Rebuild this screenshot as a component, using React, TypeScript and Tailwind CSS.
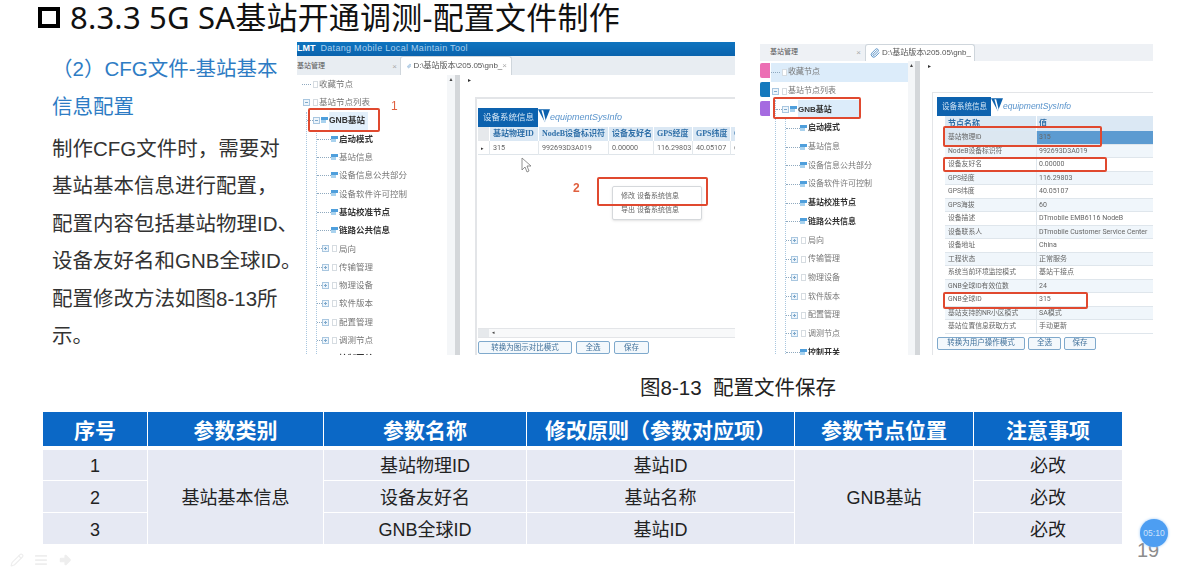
import { AlignJustify, ArrowBigRight, Paperclip, Pencil } from "lucide-react";

const cjk = "font-['Liberation_Sans','Noto_Sans_CJK_SC',sans-serif]";
const roboto = "font-['Roboto','Noto_Sans_CJK_SC',sans-serif]";

const folders = ["局向", "传输管理", "物理设备", "软件版本", "配置管理", "调测节点"];

function Box({ minus }: { minus?: boolean }) {
  return (
    <span className="relative flex h-[7px] w-[7px] shrink-0 items-center justify-center border border-[#a9c7e0] bg-[#eef5fb]">
      <span className="h-px w-[3px] bg-[#7ea9cc]" />
      {!minus && <span className="absolute h-[3px] w-px bg-[#7ea9cc]" />}
    </span>
  );
}

function Doc({ className }: { className: string }) {
  return <span className={`h-[7px] w-[5px] shrink-0 border border-[#d6dce1] bg-white ${className}`} />;
}

function Flag({ className = "" }: { className?: string }) {
  return (
    <span className={`flex h-[7px] w-[7px] shrink-0 flex-col ${className}`}>
      <span className="h-[3px] bg-[#4f9fdc]" />
      <span className="h-[3px] w-[5px] bg-[#a9d2ee]" />
    </span>
  );
}

function Dash({ w }: { w: string }) {
  return <span className={`${w} shrink-0 border-t border-dotted border-[#8fa9bf]`} />;
}

function Leaf({ label, bold, rowH }: { label: string; bold?: boolean; rowH: string }) {
  return (
    <div className={`flex items-center ${rowH}`}>
      <Dash w="w-[14px]" />
      <Flag />
      <span className={`ml-px ${bold ? "font-bold text-[#333]" : "text-[#777]"}`}>{label}</span>
    </div>
  );
}

function Tree({ rowH, text, pad, hlFirst, hlGnb }: { rowH: string; text: string; pad: string; hlFirst?: boolean; hlGnb: string }) {
  return (
    <div className={`h-full overflow-hidden ${pad} ${text} leading-none text-[#777]`}>
      <div className={`flex items-center ${rowH} ${hlFirst ? "bg-[#dcecfa]" : ""}`}>
        <Dash w="w-[9px]" />
        <Doc className="ml-[2px]" />
        <span className="ml-px">收藏节点</span>
      </div>
      <div className={`flex items-center pl-px ${rowH}`}>
        <Box minus />
        <Doc className="ml-[3px]" />
        <span className="ml-px">基站节点列表</span>
      </div>
      <div className="ml-[4px] border-l border-dotted border-[#a9c7e0]">
        <div className={`flex items-center ${rowH}`}>
          <Dash w="w-[6px]" />
          <Box minus />
          <Flag className="ml-px" />
          <span className={`ml-px flex h-full items-center font-bold text-[#333] ${hlGnb}`}>GNB基站</span>
        </div>
        <div className="ml-[9px] border-l border-dotted border-[#a9c7e0]">
          <Leaf rowH={rowH} label="启动模式" bold />
          <Leaf rowH={rowH} label="基站信息" />
          <Leaf rowH={rowH} label="设备信息公共部分" />
          <Leaf rowH={rowH} label="设备软件许可控制" />
          <Leaf rowH={rowH} label="基站校准节点" bold />
          <Leaf rowH={rowH} label="链路公共信息" bold />
          {folders.map((f) => (
            <div key={f} className={`flex items-center ${rowH}`}>
              <Dash w="w-[5px]" />
              <Box />
              <Doc className="ml-[3px]" />
              <span className="ml-[2px]">{f}</span>
            </div>
          ))}
          <Leaf rowH={rowH} label="控制开关" bold />
        </div>
      </div>
    </div>
  );
}

function ScrollCol() {
  return (
    <div className="flex shrink-0">
      <div className="w-[8px] bg-[#f4f6f8] pt-[2px] text-center text-[5px] leading-none text-[#444]">▲</div>
      <div className="w-[5px] bg-[#d4d7da]" />
    </div>
  );
}

function Tag({ label, en }: { label: string; en: string }) {
  return (
    <div className="flex h-[19px] items-center">
      <div className={`flex h-full items-center bg-[#0d62ae] pl-[5px] pr-[4px] text-[#d5e6f5] ${label}`}>设备系统信息</div>
      <svg width="12" height="19" viewBox="0 0 14 19" className="shrink-0">
        <path d="M0 0h14L8 15z" fill="#0d62ae" />
        <path d="M4 1l4 15 1-3-3-12z" fill="#fff" />
      </svg>
      <span className={`italic text-[#5a94cc] ${en}`}>equipmentSysInfo</span>
    </div>
  );
}

function Btn({ w, label }: { w: string; label: string }) {
  return (
    <div className={`${w} flex h-[13px] items-center justify-center rounded-[2px] border border-[#7fa9cc] bg-[#f3f8fc] text-[7.5px] text-[#3f6f99]`}>
      {label}
    </div>
  );
}

function Red({ className }: { className: string }) {
  return <div className={`absolute rounded-[2px] border-2 border-[#e0492f] ${className}`} />;
}

const cols1 = ["基站物理ID", "NodeB设备标识符", "设备友好名", "GPS经度", "GPS纬度", "G"];
const vals1 = ["315", "992693D3A019", "0.00000", "116.29803", "40.05107", "6"];

function ShotOne() {
  return (
    <div className="relative flex h-[313px] w-[438px] shrink-0 flex-col overflow-hidden blur-[0.4px]">
      <div className="flex h-[14px] items-center bg-gradient-to-b from-[#0f74bf] to-[#0a63ad] text-[9px] text-[#a9d0ee]">
        <span className="font-bold text-white">LMT</span>
        <span className="ml-[5px] tracking-[0.3px]">Datang Mobile Local Maintain Tool</span>
      </div>
      <div className="flex h-[19px] items-end bg-[#e8edf2] text-[8px] text-[#555]">
        <div className="flex h-[17px] w-[103px] items-center justify-between pr-[3px] text-[7px]">
          <span>基站管理</span>
          <span className="text-[8px] text-[#aaa]">×</span>
        </div>
        <div className="flex h-[19px] w-[112px] items-center rounded-t-[3px] border border-b-0 border-[#cfd6dc] bg-white pl-[6px]">
          <Paperclip size={10} className="text-[#3d80bd]" />
          <span className="ml-[2px] flex-1 whitespace-nowrap">D:\基站版本\205.05\gnb_</span>
          <span className="pr-[4px] text-[#aaa]">×</span>
        </div>
      </div>
      <div className="flex min-h-0 flex-1">
        <div className="w-[150px] shrink-0">
          <Tree rowH="h-[18.3px]" text="text-[8.5px]" pad="pl-[5px]" hlGnb="w-[39px] bg-[#e3f0fb]" />
        </div>
        <ScrollCol />
        <div className="flex min-w-0 flex-1 flex-col">
          <div className="h-[22px] pl-[8px] text-[6px] leading-[10px] text-[#333]">▸</div>
          <div className="ml-[15px] flex min-h-0 flex-1 flex-col border-l-2 border-t-2 border-[#e3e5e8] pl-[1px] pt-[9px]">
            <Tag label="text-[8.5px]" en="text-[9px]" />
            <div className="grid h-[14px] grid-cols-[11px_49px_70px_45px_39px_38px_20px] bg-[#dbe8f4] font-['Liberation_Serif','Noto_Sans_CJK_SC',serif] text-[8px] font-bold text-[#2f6fa8]">
              <span className="bg-[#e6e9ec]" />
              {cols1.map((c) => (
                <span key={c} className="flex items-center whitespace-nowrap border-l border-white pl-[3px]">{c}</span>
              ))}
            </div>
            <div className={`grid h-[14px] grid-cols-[11px_49px_70px_45px_39px_38px_20px] border-b border-[#dfe5ea] text-[7.2px] text-[#666] ${roboto}`}>
              <span className="pl-[3px] text-[5px] leading-[14px] text-[#333]">▸</span>
              {vals1.map((c) => (
                <span key={c} className="flex items-center border-l border-[#e3e8ec] pl-[3px]">{c}</span>
              ))}
            </div>
            <div className="flex-1" />
            <div className="flex h-[10px] items-center border-y border-[#e3e5e8] bg-[#f8f9fa] text-[5px] text-[#444]">
              <span className="h-full w-[11px] bg-[#e6e9ec]" />
              <span className="ml-[3px]">◂</span>
            </div>
            <div className="mt-[3px] flex gap-[4px] pb-[1px]">
              <Btn w="w-[94px]" label="转换为图示对比模式" />
              <Btn w="w-[34px]" label="全选" />
              <Btn w="w-[35px]" label="保存" />
            </div>
          </div>
        </div>
      </div>

      <Red className="left-[11px] top-[66px] h-[24px] w-[72px]" />
      <span className="absolute left-[94px] top-[58px] text-[12px] leading-none text-[#e0603f]">1</span>
      <span className="absolute left-[276px] top-[140px] text-[12px] font-bold leading-none text-[#e0603f]">2</span>
      <svg width="12" height="16" viewBox="0 0 12 16" className="absolute left-[224px] top-[115px]">
        <path d="M1 1v12l3-3 2 5 2-1-2-5h4z" fill="#fff" stroke="#777" strokeWidth="0.8" />
      </svg>
      <div className="absolute left-[315px] top-[144px] flex h-[34px] w-[90px] flex-col justify-center gap-[2px] rounded-[2px] border border-[#d5d8db] bg-white pl-[8px] text-[7px] leading-[12px] text-[#666] shadow-sm">
        <span>修改 设备系统信息</span>
        <span>导出 设备系统信息</span>
      </div>
      <Red className="left-[300px] top-[135px] h-[29px] w-[111px]" />
    </div>
  );
}

const rows2 = [
  ["基站物理ID", "315"],
  ["NodeB设备标识符", "992693D3A019"],
  ["设备友好名", "0.00000"],
  ["GPS经度", "116.29803"],
  ["GPS纬度", "40.05107"],
  ["GPS海拔", "60"],
  ["设备描述", "DTmobile EMB6116 NodeB"],
  ["设备联系人", "DTmobile Customer Service Center"],
  ["设备地址", "China"],
  ["工程状态", "正常服务"],
  ["系统当前环境监控模式", "基站干接点"],
  ["GNB全球ID有效位数", "24"],
  ["GNB全球ID", "315"],
  ["基站支持的NR小区模式", "SA模式"],
  ["基站位置信息获取方式", "手动更新"],
];

function ShotTwo() {
  return (
    <div className="relative mt-[2px] flex h-[311px] w-[393px] shrink-0 flex-col overflow-hidden blur-[0.4px]">
      <div className="flex h-[17px] items-end bg-[#eef1f5] text-[8px] text-[#555]">
        <div className="flex h-[17px] w-[105px] items-center justify-between pl-[10px] pr-[4px] text-[7px]">
          <span>基站管理</span>
          <span className="text-[8px] text-[#aaa]">×</span>
        </div>
        <div className="flex h-[17px] w-[110px] items-center rounded-t-[3px] border border-b-0 border-[#cfd6dc] bg-white pl-[4px]">
          <Paperclip size={10} className="text-[#3d80bd]" />
          <span className="ml-[2px] whitespace-nowrap">D:\基站版本\205.05\gnb_</span>
        </div>
      </div>
      <div className="flex min-h-0 flex-1">
        <div className="flex w-[10px] shrink-0 flex-col gap-[4px] pt-[2px]">
          <span className="h-[15px] rounded-l-[2px] bg-[#ec6fb4]" />
          <span className="h-[15px] rounded-l-[2px] bg-[#1479bd]" />
          <span className="h-[15px] rounded-l-[2px] bg-[#a56be0]" />
        </div>
        <div className="w-[138px] shrink-0">
          <Tree rowH="h-[18.7px]" text="text-[8px]" pad="pl-px pt-[2px]" hlFirst hlGnb="w-[63px] bg-[#dcecfa]" />
        </div>
        <div className="flex shrink-0">
          <div className="w-[7px] bg-[#f4f6f8] pt-[2px] text-center text-[5px] leading-none text-[#444]">▲</div>
          <div className="w-[5px] bg-[#d4d7da]" />
        </div>
        <div className="flex min-w-0 flex-1 flex-col">
          <div className="h-[31px] pl-[8px] text-[6px] leading-[10px] text-[#333]">▸</div>
          <div className="ml-[12px] flex min-h-0 flex-1 flex-col border-l border-t border-[#e3e5e8] pl-[4px] pt-[4px]">
            <Tag label="text-[7.5px]" en="text-[8.5px]" />
            <div className="ml-[8px] grid h-[15px] grid-cols-[91px_117px] bg-[#dbe8f4] text-[8px] font-bold text-[#2f6fa8]">
              <span className="flex items-center pl-[3px]">节点名称</span>
              <span className="flex items-center border-l border-white pl-[2px]">值</span>
            </div>
            <div className={`${roboto} ml-[8px] text-[#666]`}>
              {rows2.map(([k, v], i) => (
                <div key={k} className={`grid h-[13.5px] grid-cols-[91px_117px] border-b border-[#dfe6ec] ${i % 2 ? "bg-[#f0f6fb]" : "bg-white"}`}>
                  <span className={`flex items-center whitespace-nowrap pl-[3px] text-[6.8px] ${i === 0 ? "bg-[#dce7f1]" : ""}`}>{k}</span>
                  <span className={`flex items-center whitespace-nowrap border-l border-[#dfe6ec] pl-[2px] text-[7px] ${i === 0 ? "bg-[#5c9bd1]" : ""}`}>{v}</span>
                </div>
              ))}
            </div>
            <div className="mt-[3px] flex gap-[3px]">
              <Btn w="w-[88px]" label="转换为用户操作模式" />
              <Btn w="w-[33px]" label="全选" />
              <Btn w="w-[32px]" label="保存" />
            </div>
          </div>
        </div>
      </div>

      <Red className="left-[13px] top-[53px] h-[22px] w-[88px]" />
      <Red className="left-[183px] top-[82px] h-[21px] w-[159px]" />
      <Red className="left-[183px] top-[113px] h-[15px] w-[164px]" />
      <Red className="left-[183px] top-[248px] h-[17px] w-[145px]" />
    </div>
  );
}

const tableCols = "grid grid-cols-[104px_175px_202px_267px_178px_148px] gap-x-px";
const cell = "flex items-center justify-center bg-[#e6e9f3] pt-[2px]";

export default function App() {
  return (
    <div className={`relative h-[571px] w-[1191px] overflow-hidden bg-white ${cjk}`}>
      <div className="flex h-[34px] items-center gap-[10px] pl-[38px]">
        <span className="h-[21px] w-[22px] border-[4px] border-black" />
        <h1 className="font-['Noto_Sans','Noto_Sans_CJK_SC',sans-serif] text-[31px] font-normal leading-[34px] tracking-[0.2px] text-[#111]">
          8.3.3 5G SA基站开通调测-配置文件制作
        </h1>
      </div>

      <div className="mt-[8px] flex pl-[52px]">
        <div className="w-[245px] shrink-0 whitespace-nowrap pt-[8px] text-[20.5px]">
          <div className="leading-[38px] text-[#2e7cc4]">
            <div>（2）CFG文件-基站基本</div>
            <div>信息配置</div>
          </div>
          <div className="mt-[4px] leading-[37.4px] text-[#333]">
            <div>制作CFG文件时，需要对</div>
            <div>基站基本信息进行配置，</div>
            <div>配置内容包括基站物理ID、</div>
            <div>设备友好名和GNB全球ID。</div>
            <div>配置修改方法如图8-13所</div>
            <div>示。</div>
          </div>
        </div>
        <ShotOne />
        <div className="w-[25px] shrink-0" />
        <ShotTwo />
      </div>

      <div className="mt-[18px] h-[30px] whitespace-pre pl-[640px] text-[20.5px] leading-[30px] text-[#222]">
        图8-13  配置文件保存
      </div>

      <div className="ml-[43px] mt-[9px] w-[1079px] text-[18px] leading-none text-[#222]">
        <div className={`${tableCols} h-[34px] text-[21px] font-bold text-white`}>
          {["序号", "参数类别", "参数名称", "修改原则（参数对应项）", "参数节点位置", "注意事项"].map((h) => (
            <div key={h} className="flex items-center justify-center bg-[#0b68c6] pt-[3px]">{h}</div>
          ))}
        </div>
        <div className={`${tableCols} mt-[4px] grid-rows-[30px_31px_31px] gap-y-px`}>
          <div className={cell}>1</div>
          <div className={`${cell} row-span-3`}>基站基本信息</div>
          <div className={cell}>基站物理ID</div>
          <div className={cell}>基站ID</div>
          <div className={`${cell} row-span-3`}>GNB基站</div>
          <div className={cell}>必改</div>
          <div className={cell}>2</div>
          <div className={cell}>设备友好名</div>
          <div className={cell}>基站名称</div>
          <div className={cell}>必改</div>
          <div className={cell}>3</div>
          <div className={cell}>GNB全球ID</div>
          <div className={cell}>基站ID</div>
          <div className={cell}>必改</div>
        </div>
      </div>

      <div className="mt-[9px] flex items-center gap-[10px] pl-[10px] text-[#eeeeee]">
        <Pencil size={14} />
        <AlignJustify size={14} strokeWidth={3} />
        <ArrowBigRight size={14} fill="currentColor" />
      </div>

      <span className="absolute left-[1137px] top-[539px] text-[20px] leading-[22px] text-[#8c8c8c]">19</span>
      <div className="absolute left-[1140px] top-[519px] flex h-[28px] w-[28px] items-center justify-center rounded-full bg-[#4d9ef2] text-[8.5px] text-[#cfe4fb] shadow-[0_0_3px_#9cc8f5]">
        05:10
      </div>
    </div>
  );
}
